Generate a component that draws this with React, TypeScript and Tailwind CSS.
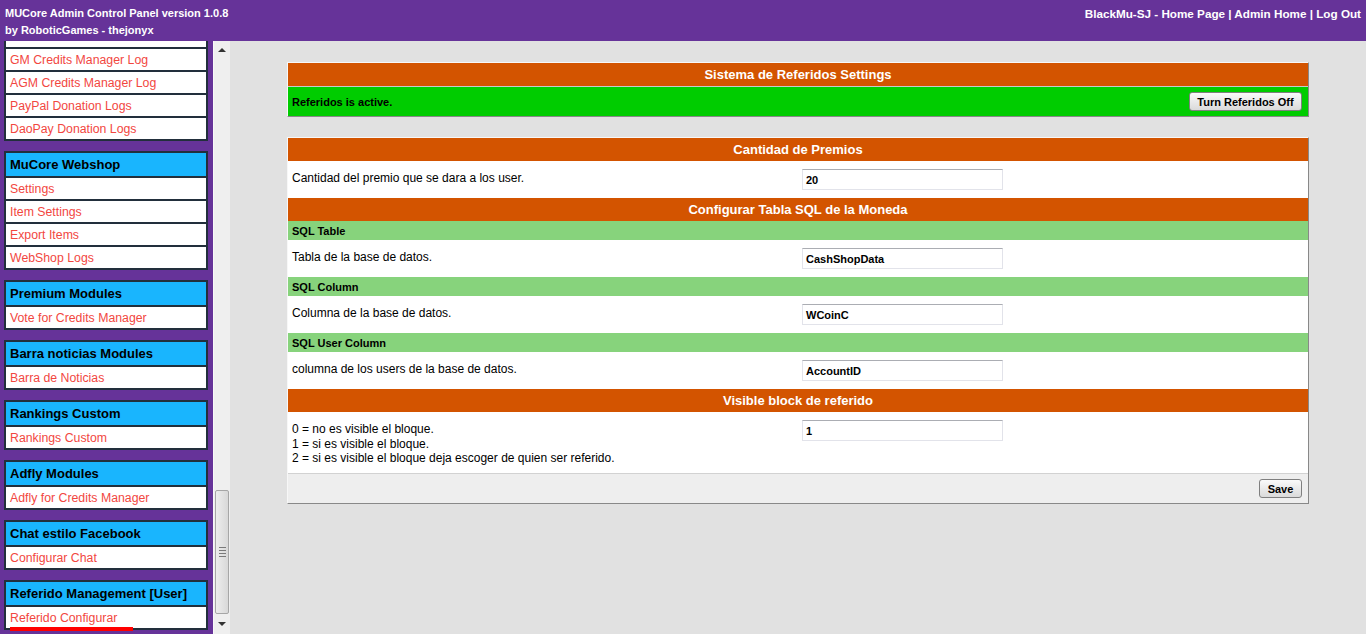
import type { ReactNode } from 'react';

const FONT = { fontFamily: 'Tahoma, "Liberation Sans", Arial, sans-serif' };

type Box = { title?: string; items: string[]; active?: string };

const MENU: Box[] = [
  {
    items: ['', 'GM Credits Manager Log', 'AGM Credits Manager Log', 'PayPal Donation Logs', 'DaoPay Donation Logs'],
  },
  { title: 'MuCore Webshop', items: ['Settings', 'Item Settings', 'Export Items', 'WebShop Logs'] },
  { title: 'Premium Modules', items: ['Vote for Credits Manager'] },
  { title: 'Barra noticias Modules', items: ['Barra de Noticias'] },
  { title: 'Rankings Custom', items: ['Rankings Custom'] },
  { title: 'Adfly Modules', items: ['Adfly for Credits Manager'] },
  { title: 'Chat estilo Facebook', items: ['Configurar Chat'] },
  { title: 'Referido Management [User]', items: ['Referido Configurar'], active: 'Referido Configurar' },
];

function MenuBox({ box }: { box: Box }) {
  return (
    <div className="bg-[#222f3c] p-[2px] flex flex-col gap-[2px] mb-[10px]">
      {box.title && (
        <div className="h-[23px] bg-[#19b5fe] text-black font-bold text-[13px] leading-[24px] pl-[4px] whitespace-nowrap">
          {box.title}
        </div>
      )}
      {box.items.map((it, i) => (
        <div key={i} className="relative h-[21px] bg-white text-[#f2473f] text-[12.3px] leading-[22px] pl-[4px] whitespace-nowrap">
          {it}
          {box.active === it && <span className="absolute left-[4px] top-[20px] h-[4px] w-[123px] bg-[#ff0000]" />}
        </div>
      ))}
    </div>
  );
}

function ScrollBar() {
  return (
    <div className="w-[17px] h-full bg-[#efefef] border-l border-[#f8f8f8] flex flex-col items-center">
      <div className="h-[17px] w-full flex items-center justify-center pt-[1px]">
        <span className="block w-0 h-0 border-l-[4px] border-r-[4px] border-b-[4px] border-l-transparent border-r-transparent border-b-[#333]" />
      </div>
      <div className="flex-1" />
      <div className="w-[14px] h-[124px] rounded-[2px] border border-[#a6a6a6] bg-gradient-to-r from-[#ededed] to-[#d8d8d8] flex flex-col items-center justify-center gap-[2px]">
        <span className="block w-[7px] h-px bg-[#7a7a7a]" />
        <span className="block w-[7px] h-px bg-[#7a7a7a]" />
        <span className="block w-[7px] h-px bg-[#7a7a7a]" />
        <span className="block w-[7px] h-px bg-[#7a7a7a]" />
      </div>
      <div className="h-[20px] w-full flex items-center justify-center">
        <span className="block w-0 h-0 border-l-[4px] border-r-[4px] border-t-[4px] border-l-transparent border-r-transparent border-t-[#333]" />
      </div>
    </div>
  );
}

function Sidebar() {
  return (
    <div className="flex h-full shrink-0">
      <div className="w-[213px] h-full bg-[#663399] overflow-hidden pl-[4px] pr-[5px]">
        <div className="-mt-[17px]">
          {MENU.map((b, i) => (
            <MenuBox key={i} box={b} />
          ))}
        </div>
      </div>
      <ScrollBar />
    </div>
  );
}

function OrangeHead({ children }: { children: ReactNode }) {
  return (
    <div className="h-[23px] bg-[#d35400] text-white font-bold text-[13px] leading-[24px] text-center">{children}</div>
  );
}

function GreenHead({ children }: { children: ReactNode }) {
  return <div className="h-[19px] bg-[#87d37c] text-black font-bold text-[11px] leading-[21px] px-[4px]">{children}</div>;
}

function Field({ label, value }: { label: ReactNode; value: string }) {
  return (
    <div className="grid grid-cols-2 bg-white text-[12px] leading-[14.5px] text-black">
      <div className="px-[4px] pt-[10px] pb-[7.5px]">{label}</div>
      <div className="px-[4px] py-[8px]">
        <div className="w-[201px] h-[21px] border border-[#e2e3ea] border-t-[#abadb3] bg-white font-bold text-[11px] leading-[20px] pl-[3px]">
          {value}
        </div>
      </div>
    </div>
  );
}

function Btn({ children, w }: { children: ReactNode; w: string }) {
  return (
    <button
      className={`${w} h-[19px] rounded-[3px] border border-[#7f7f7f] bg-gradient-to-b from-[#fafafa] to-[#dadada] text-black font-bold text-[11px] leading-[18px]`}
    >
      {children}
    </button>
  );
}

export default function App() {
  return (
    <div style={FONT} className="h-screen w-full overflow-hidden flex flex-col bg-[#e1e1e1]">
      <div className="h-[41px] shrink-0 bg-[#663399] text-white font-bold flex justify-between px-[5px] pt-[5px]">
        <div className="text-[11px] leading-[17px]">
          <div>MUCore Admin Control Panel version 1.0.8</div>
          <div>by RoboticGames - thejonyx</div>
        </div>
        <div className="text-[11.7px] leading-[17px] whitespace-nowrap">
          BlackMu-SJ - Home Page | Admin Home | Log Out
        </div>
      </div>

      <div className="flex flex-1 min-h-0">
        <Sidebar />

        <main className="flex-1 px-[57px] pt-[21px] flex flex-col gap-[20px]">
          <section className="border border-t-[#f7f7f7] border-l-[#f7f7f7] border-r-[#888] border-b-[#888]">
            <OrangeHead>Sistema de Referidos Settings</OrangeHead>
            <div className="h-[30px] bg-[#00cc00] border-t border-[#c9c9c9] flex items-center justify-between pl-[4px] pr-[6px]">
              <span className="text-[11px] font-bold text-black pt-[1px]">Referidos is active.</span>
              <Btn w="w-[113px]">Turn Referidos Off</Btn>
            </div>
          </section>

          <section className="border border-t-[#f7f7f7] border-l-[#f7f7f7] border-r-[#888] border-b-[#888]">
            <OrangeHead>Cantidad de Premios</OrangeHead>
            <Field label="Cantidad del premio que se dara a los user." value="20" />
            <OrangeHead>Configurar Tabla SQL de la Moneda</OrangeHead>
            <GreenHead>SQL Table</GreenHead>
            <Field label="Tabla de la base de datos." value="CashShopData" />
            <GreenHead>SQL Column</GreenHead>
            <Field label="Columna de la base de datos." value="WCoinC" />
            <GreenHead>SQL User Column</GreenHead>
            <Field label="columna de los users de la base de datos." value="AccountID" />
            <OrangeHead>Visible block de referido</OrangeHead>
            <Field
              label={
                <>
                  <div>0 = no es visible el bloque.</div>
                  <div>1 = si es visible el bloque.</div>
                  <div>2 = si es visible el bloque deja escoger de quien ser referido.</div>
                </>
              }
              value="1"
            />
            <div className="h-[30px] bg-[#eeeeee] border-t border-[#d2d2d2] flex items-center justify-end pr-[6px]">
              <Btn w="w-[43px]">Save</Btn>
            </div>
          </section>
        </main>
      </div>
    </div>
  );
}
